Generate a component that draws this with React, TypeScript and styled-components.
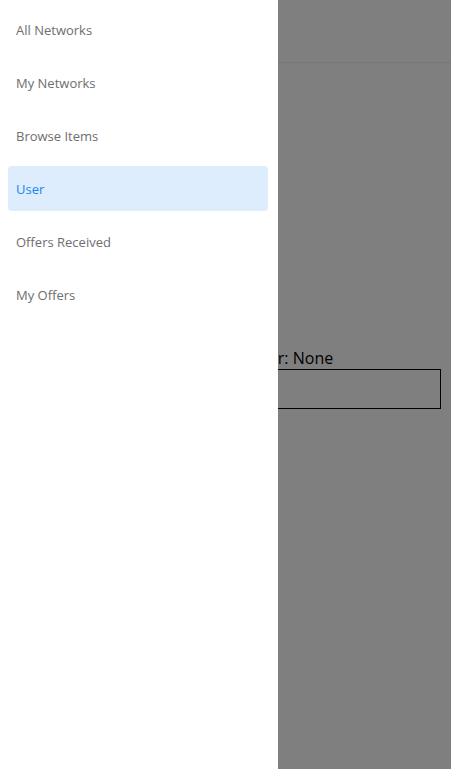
import styled, { createGlobalStyle } from 'styled-components'

const GlobalStyle = createGlobalStyle`
  html, body {
    margin: 0;
    padding: 0;
    background: #fff;
    font-family: 'Open Sans', 'Noto Sans', sans-serif;
  }
`

const Page = styled.div`
  min-height: 769px;
  display: flex;
  flex-direction: column;
`

const Header = styled.header`
  height: 62px;
  border-bottom: 1px solid #eee;
`

const Content = styled.main`
  padding: 285px 10px 0;
  display: flex;
  flex-direction: column;
`

const UserLine = styled.div`
  font-size: 16px;
  color: #000;
  text-align: center;
  padding-left: 72px;
  line-height: 21px;
`

const UserBox = styled.div`
  height: 38px;
  border: 1px solid #000;
`

const Overlay = styled.div`
  position: fixed;
  inset: 0;
  background: rgba(0, 0, 0, 0.5);
`

const Drawer = styled.nav`
  position: fixed;
  top: 0;
  left: 0;
  bottom: 0;
  width: 278px;
  background: #fff;
  padding: 7px 10px 8px 8px;
  box-sizing: border-box;
  display: flex;
  flex-direction: column;
  gap: 8px;
`

const MenuItem = styled.a<{ $active?: boolean }>`
  height: 45px;
  display: flex;
  align-items: center;
  padding: 0 8px;
  border-radius: 4px;
  font-size: 13px;
  text-decoration: none;
  cursor: pointer;
  color: ${(p) => (p.$active ? '#1a84f0' : '#6e6e6e')};
  background: ${(p) => (p.$active ? '#ddedfd' : 'transparent')};
`

const items = [
  'All Networks',
  'My Networks',
  'Browse Items',
  'User',
  'Offers Received',
  'My Offers',
]

const App = () => {
  return (
    <>
      <GlobalStyle />
      <Page>
        <Header />
        <Content>
          <UserLine>Current user: None</UserLine>
          <UserBox />
        </Content>
      </Page>
      <Overlay />
      <Drawer>
        {items.map((item) => (
          <MenuItem key={item} $active={item === 'User'}>
            {item}
          </MenuItem>
        ))}
      </Drawer>
    </>
  )
}

export default App
